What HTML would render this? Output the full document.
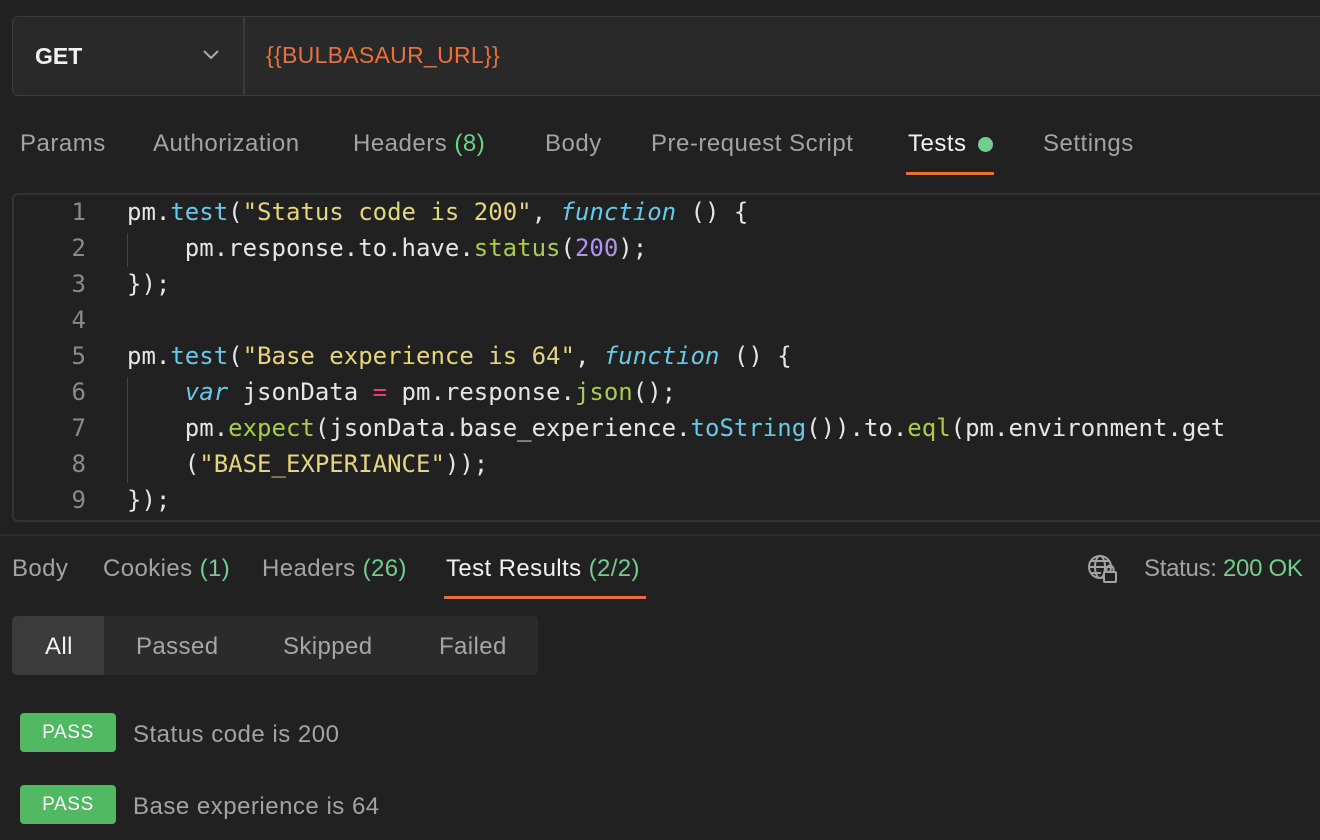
<!DOCTYPE html>
<html><head><style>
body{margin:0;width:1320px;height:840px;background:#212121;font-family:"Liberation Sans",sans-serif;overflow:hidden;position:relative;color:#a6a6a6}
.abs{position:absolute}
.url{left:12px;top:16px;width:1330px;height:78px;background:#292929;border:1px solid #3b3b3b;border-radius:6px}
.tab{position:absolute;font-size:24px;letter-spacing:0.5px;color:#a3a3a3;top:130px}
.g{color:#6fcf8c}
.code{left:12px;top:193px;width:1320px;height:325px;border-top:2px solid #333;border-left:2px solid #333;border-bottom:2px solid #333;border-radius:6px 0 0 6px;font-family:"DejaVu Sans Mono",monospace;font-size:24px}
.ln{position:absolute;left:0;width:72px;text-align:right;color:#8a8a8a}
.cl{position:absolute;left:113px;color:#e6e6e6;white-space:pre}
.f{color:#6ac8e6}.s{color:#e6d67a}.k{color:#6ac8e6;font-style:italic}.m{color:#a9cf3e}.n{color:#b392f0}.v{color:#e3436b;font-style:italic}
.bt{position:absolute;font-size:24px;letter-spacing:0.4px;color:#a3a3a3;top:555px}
.pass{position:absolute;left:20px;width:96px;height:39px;background:#52b963;border-radius:4px;color:#fff;font-size:19px;letter-spacing:0.6px;text-align:center;line-height:39px}
.pt{position:absolute;left:133px;font-size:24px;letter-spacing:0.5px;color:#a3a3a3}
</style></head><body>
<div class="abs url"></div>
<div class="abs" style="left:243px;top:17px;width:2px;height:78px;background:#3b3b3b"></div>
<div class="abs" style="left:35px;top:43px;font-size:23px;font-weight:bold;color:#f2f2f2">GET</div>
<svg class="abs" style="left:202px;top:49px" width="18" height="12"><path d="M2 2 L9 9 L16 2" stroke="#aaa" stroke-width="2" fill="none"/></svg>
<div class="abs" style="left:266px;top:42px;font-size:23px;letter-spacing:0.3px;color:#e8703f">{{BULBASAUR_URL}}</div>

<div class="tab" style="left:20px">Params</div>
<div class="tab" style="left:153px">Authorization</div>
<div class="tab" style="left:353px">Headers <span class="g">(8)</span></div>
<div class="tab" style="left:545px">Body</div>
<div class="tab" style="left:651px">Pre-request Script</div>
<div class="tab" style="left:908px;color:#f2f2f2">Tests</div>
<div class="abs" style="left:978px;top:137px;width:15px;height:15px;border-radius:50%;background:#6fcf8c"></div>
<div class="tab" style="left:1043px">Settings</div>
<div class="abs" style="left:906px;top:172px;width:88px;height:3px;background:#e8703f"></div>

<div class="abs code">
<div class="ln" style="top:3px">1</div><div class="cl" style="top:3px">pm.<span class="f">test</span>(<span class="s">"Status code is 200"</span>, <span class="k">function</span> () {</div>
<div class="ln" style="top:39px">2</div><div class="cl" style="top:39px">    pm.response.to.have.<span class="m">status</span>(<span class="n">200</span>);</div>
<div class="ln" style="top:75px">3</div><div class="cl" style="top:75px">});</div>
<div class="ln" style="top:111px">4</div>
<div class="ln" style="top:147px">5</div><div class="cl" style="top:147px">pm.<span class="f">test</span>(<span class="s">"Base experience is 64"</span>, <span class="k">function</span> () {</div>
<div class="ln" style="top:183px">6</div><div class="cl" style="top:183px">    <span class="k">var</span> jsonData <span style="color:#e3436b">=</span> pm.response.<span class="m">json</span>();</div>
<div class="ln" style="top:219px">7</div><div class="cl" style="top:219px">    pm.<span class="m">expect</span>(jsonData.base_experience.<span class="f">toString</span>()).to.<span class="m">eql</span>(pm.environment.get</div>
<div class="ln" style="top:255px">8</div><div class="cl" style="top:255px">    (<span class="s">"BASE_EXPERIANCE"</span>));</div>
<div class="ln" style="top:291px">9</div><div class="cl" style="top:291px">});</div>
<div class="abs" style="left:113px;top:38px;width:1px;height:34px;background:#444"></div>
<div class="abs" style="left:113px;top:182px;width:1px;height:106px;background:#444"></div>
</div>

<div class="abs" style="left:0;top:534px;width:1320px;height:2px;background:#2e2e2e"></div>
<div class="bt" style="left:12px">Body</div>
<div class="bt" style="left:103px">Cookies <span class="g">(1)</span></div>
<div class="bt" style="left:262px">Headers <span class="g">(26)</span></div>
<div class="bt" style="left:446px;color:#f2f2f2">Test Results <span class="g">(2/2)</span></div>
<div class="abs" style="left:444px;top:596px;width:202px;height:3px;background:#e8703f"></div>
<svg class="abs" style="left:1087px;top:554px" width="34" height="30" viewBox="0 0 34 30"><g stroke="#a3a3a3" stroke-width="2" fill="none"><circle cx="13" cy="13" r="11"/><ellipse cx="13" cy="13" rx="5" ry="11"/><path d="M2 13H24M4 7H22M4 19H14"/></g><rect x="17" y="18" width="12" height="10" rx="1" fill="#212121" stroke="#a3a3a3" stroke-width="2"/><path d="M19.5 18v-3a3.5 3.5 0 0 1 7 0v3" stroke="#a3a3a3" stroke-width="2" fill="none"/></svg>
<div class="bt" style="left:1144px;letter-spacing:-0.3px">Status: <span class="g">200 OK</span></div>

<div class="abs" style="left:12px;top:616px;width:526px;height:59px;background:#2b2b2b;border-radius:5px"></div>
<div class="abs" style="left:12px;top:616px;width:92px;height:59px;background:#3b3b3b;border-radius:5px 0 0 5px"></div>
<div class="abs" style="left:45px;top:633px;font-size:24px;letter-spacing:0.4px;color:#f2f2f2">All</div>
<div class="abs" style="left:136px;top:633px;font-size:24px;letter-spacing:0.4px">Passed</div>
<div class="abs" style="left:283px;top:633px;font-size:24px;letter-spacing:0.4px">Skipped</div>
<div class="abs" style="left:439px;top:633px;font-size:24px;letter-spacing:0.4px">Failed</div>

<div class="pass" style="top:713px">PASS</div><div class="pt" style="top:721px">Status code is 200</div>
<div class="pass" style="top:785px">PASS</div><div class="pt" style="top:793px">Base experience is 64</div>
</body></html>
